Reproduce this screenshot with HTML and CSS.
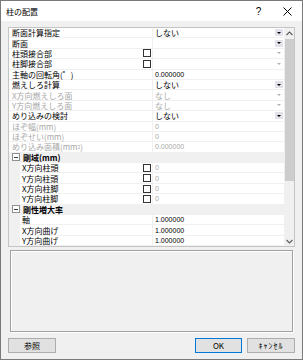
FILE: index.html
```html
<!DOCTYPE html>
<html lang="ja">
<head>
    <meta charset="UTF-8">
    <title>柱の配置</title>
    <link rel="stylesheet" href="styles.css">
</head>
<body>
    <div class="dialog">
        <div class="titlebar">
            <span class="title">柱の配置</span>
            <span class="help">?</span>
            <span class="close">
                <svg width="9" height="9" viewBox="0 0 9 9"><path d="M0.5 0.5L8.5 8.5M8.5 0.5L0.5 8.5" stroke="#000" stroke-width="1"/></svg>
            </span>
        </div>
        <div class="client">
            <div class="grid">
                <div class="rows">
                    <div class="row"><div class="label">断面計算指定</div><div class="value">しない<span class="drop on"></span></div></div>
                    <div class="row"><div class="label">断面</div><div class="value"><span class="drop on"></span></div></div>
                    <div class="row"><div class="label">柱頭接合部<span class="check"></span></div><div class="value"><span class="drop"></span></div></div>
                    <div class="row"><div class="label">柱脚接合部<span class="check"></span></div><div class="value"><span class="drop"></span></div></div>
                    <div class="row"><div class="label">主軸の回転角(゜)</div><div class="value num">0.000000</div></div>
                    <div class="row"><div class="label">燃えしろ計算</div><div class="value">しない<span class="drop on"></span></div></div>
                    <div class="row off"><div class="label">X方向燃えしろ面</div><div class="value">なし<span class="drop"></span></div></div>
                    <div class="row off"><div class="label">Y方向燃えしろ面</div><div class="value">なし<span class="drop"></span></div></div>
                    <div class="row"><div class="label">めり込みの検討</div><div class="value">しない<span class="drop on"></span></div></div>
                    <div class="row off"><div class="label">ほぞ幅(mm)</div><div class="value num">0</div></div>
                    <div class="row off"><div class="label">ほぞせい(mm)</div><div class="value num">0</div></div>
                    <div class="row off"><div class="label">めり込み面積(mm<sup>2</sup>)</div><div class="value num">0.000000</div></div>
                    <div class="row cat"><span class="toggle"></span>剛域(mm)</div>
                    <div class="row sub"><div class="label">X方向柱頭<span class="check"></span></div><div class="value num dim">0</div></div>
                    <div class="row sub"><div class="label">Y方向柱頭<span class="check"></span></div><div class="value num dim">0</div></div>
                    <div class="row sub"><div class="label">X方向柱脚<span class="check"></span></div><div class="value num dim">0</div></div>
                    <div class="row sub"><div class="label">Y方向柱脚<span class="check"></span></div><div class="value num dim">0</div></div>
                    <div class="row cat"><span class="toggle"></span>剛性増大率</div>
                    <div class="row sub"><div class="label">軸</div><div class="value num">1.000000</div></div>
                    <div class="row sub"><div class="label">X方向曲げ</div><div class="value num">1.000000</div></div>
                    <div class="row sub"><div class="label">Y方向曲げ</div><div class="value num">1.000000</div></div>
                </div>
                <div class="scrollbar">
                    <span class="arrow">
                        <svg width="7" height="5" viewBox="0 0 7 5"><path d="M0.5 4L3.5 1L6.5 4" fill="none" stroke="#606060" stroke-width="1.2"/></svg>
                    </span>
                    <div class="thumb"></div>
                    <span class="arrow down">
                        <svg width="7" height="5" viewBox="0 0 7 5"><path d="M0.5 1L3.5 4L6.5 1" fill="none" stroke="#606060" stroke-width="1.2"/></svg>
                    </span>
                </div>
            </div>
            <div class="desc"></div>
            <div class="buttons">
                <button class="btn">参照</button>
                <span class="spacer"></span>
                <button class="btn ok">OK</button>
                <button class="btn cancel">ｷｬﾝｾﾙ</button>
            </div>
        </div>
    </div>
</body>
</html>
```
FILE: styles.css
```css
body{
    margin: 0;
    font-family: "Noto Sans CJK JP", "Noto Sans", sans-serif;
    font-size: 8px;
    color: #000;
}
.dialog{
    width: 303px;
    height: 360px;
    box-sizing: border-box;
    border: 1px solid #7a7a7a;
    background: #f0f0f0;
    display: flex;
    flex-direction: column;
}
.titlebar{
    height: 20px;
    background: #fff;
    display: flex;
    align-items: center;
    padding-left: 5px;
}
.title{
    flex: 1;
}
.help, .close{
    width: 29px;
    display: flex;
    justify-content: center;
    align-items: center;
}
.help{
    font-family: "Liberation Sans", sans-serif;
    font-size: 10px;
}
.client{
    flex: 1;
    display: flex;
    flex-direction: column;
    padding: 6px 7px 6px 7px;
}
.grid{
    display: flex;
    border: 1px solid #c4c4c4;
    background: #fff;
}
.rows{
    flex: 1;
}
.row{
    display: flex;
    height: 10.4px;
    box-sizing: border-box;
    border-bottom: 1px solid #f0f0f0;
    line-height: 9px;
    white-space: nowrap;
}
.label{
    width: 144px;
    box-sizing: border-box;
    border-right: 1px solid #f0f0f0;
    padding-left: 3px;
    display: flex;
    align-items: center;
}
.row.sub .label{
    border-left: 11px solid #f0f0f0;
    padding-left: 2px;
}
.label sup{
    font-size: 5px;
    line-height: 0;
}
.check{
    width: 8px;
    height: 8px;
    box-sizing: border-box;
    border: 1px solid #333;
    background: #fff;
    margin-left: auto;
    margin-right: 1px;
}
.value{
    flex: 1;
    padding-left: 2px;
    display: flex;
    align-items: center;
}
.num{
    font-family: "Liberation Sans", sans-serif;
    font-size: 7px;
}
.row.off, .dim{
    color: #a8a8a8;
}
.drop{
    margin-left: auto;
    margin-right: 1px;
    width: 8px;
    height: 7px;
    display: flex;
    justify-content: center;
    align-items: center;
}
.drop::after{
    content: "";
    border-left: 2px solid transparent;
    border-right: 2px solid transparent;
    border-top: 2px solid #b0b0b0;
}
.drop.on{
    background: #e2e2ea;
}
.drop.on::after{
    border-left-width: 2px;
    border-right-width: 2px;
    border-top: 2px solid #000;
}
.row.cat{
    background: #f0f0f0;
    font-weight: bold;
    align-items: center;
    padding-left: 3px;
}
.toggle{
    width: 8px;
    height: 8px;
    box-sizing: border-box;
    border: 1px solid #909090;
    background: #fff;
    margin-right: 3px;
    display: flex;
    justify-content: center;
    align-items: center;
}
.toggle::after{
    content: "";
    width: 4px;
    height: 1px;
    background: #404040;
}
.scrollbar{
    width: 10px;
    background: #f0f0f0;
    display: flex;
    flex-direction: column;
    align-items: center;
}
.arrow{
    height: 10px;
    display: flex;
    align-items: center;
}
.arrow.down{
    margin-top: auto;
}
.thumb{
    width: 9px;
    height: 142px;
    margin-top: 1px;
    background: #cdcdcd;
}
.desc{
    margin: 3px 2px 0 2px;
    height: 82px;
    box-sizing: border-box;
    border: 1px solid #a0a0a0;
    box-shadow: inset 1px 1px 0 #fff, 1px 1px 0 #fff;
}
.buttons{
    margin-top: auto;
    display: flex;
}
.spacer{
    flex: 1;
}
.btn{
    width: 48px;
    height: 15px;
    padding: 0;
    border: 1px solid #adadad;
    background: #e1e1e1;
    font-family: "Noto Sans CJK JP", sans-serif;
    font-size: 8px;
    line-height: 12px;
    color: #000;
}
.btn.ok{
    width: 47px;
    margin-right: 5px;
    border-color: #0078d7;
}
.btn.cancel{
    letter-spacing: 1px;
}
```
